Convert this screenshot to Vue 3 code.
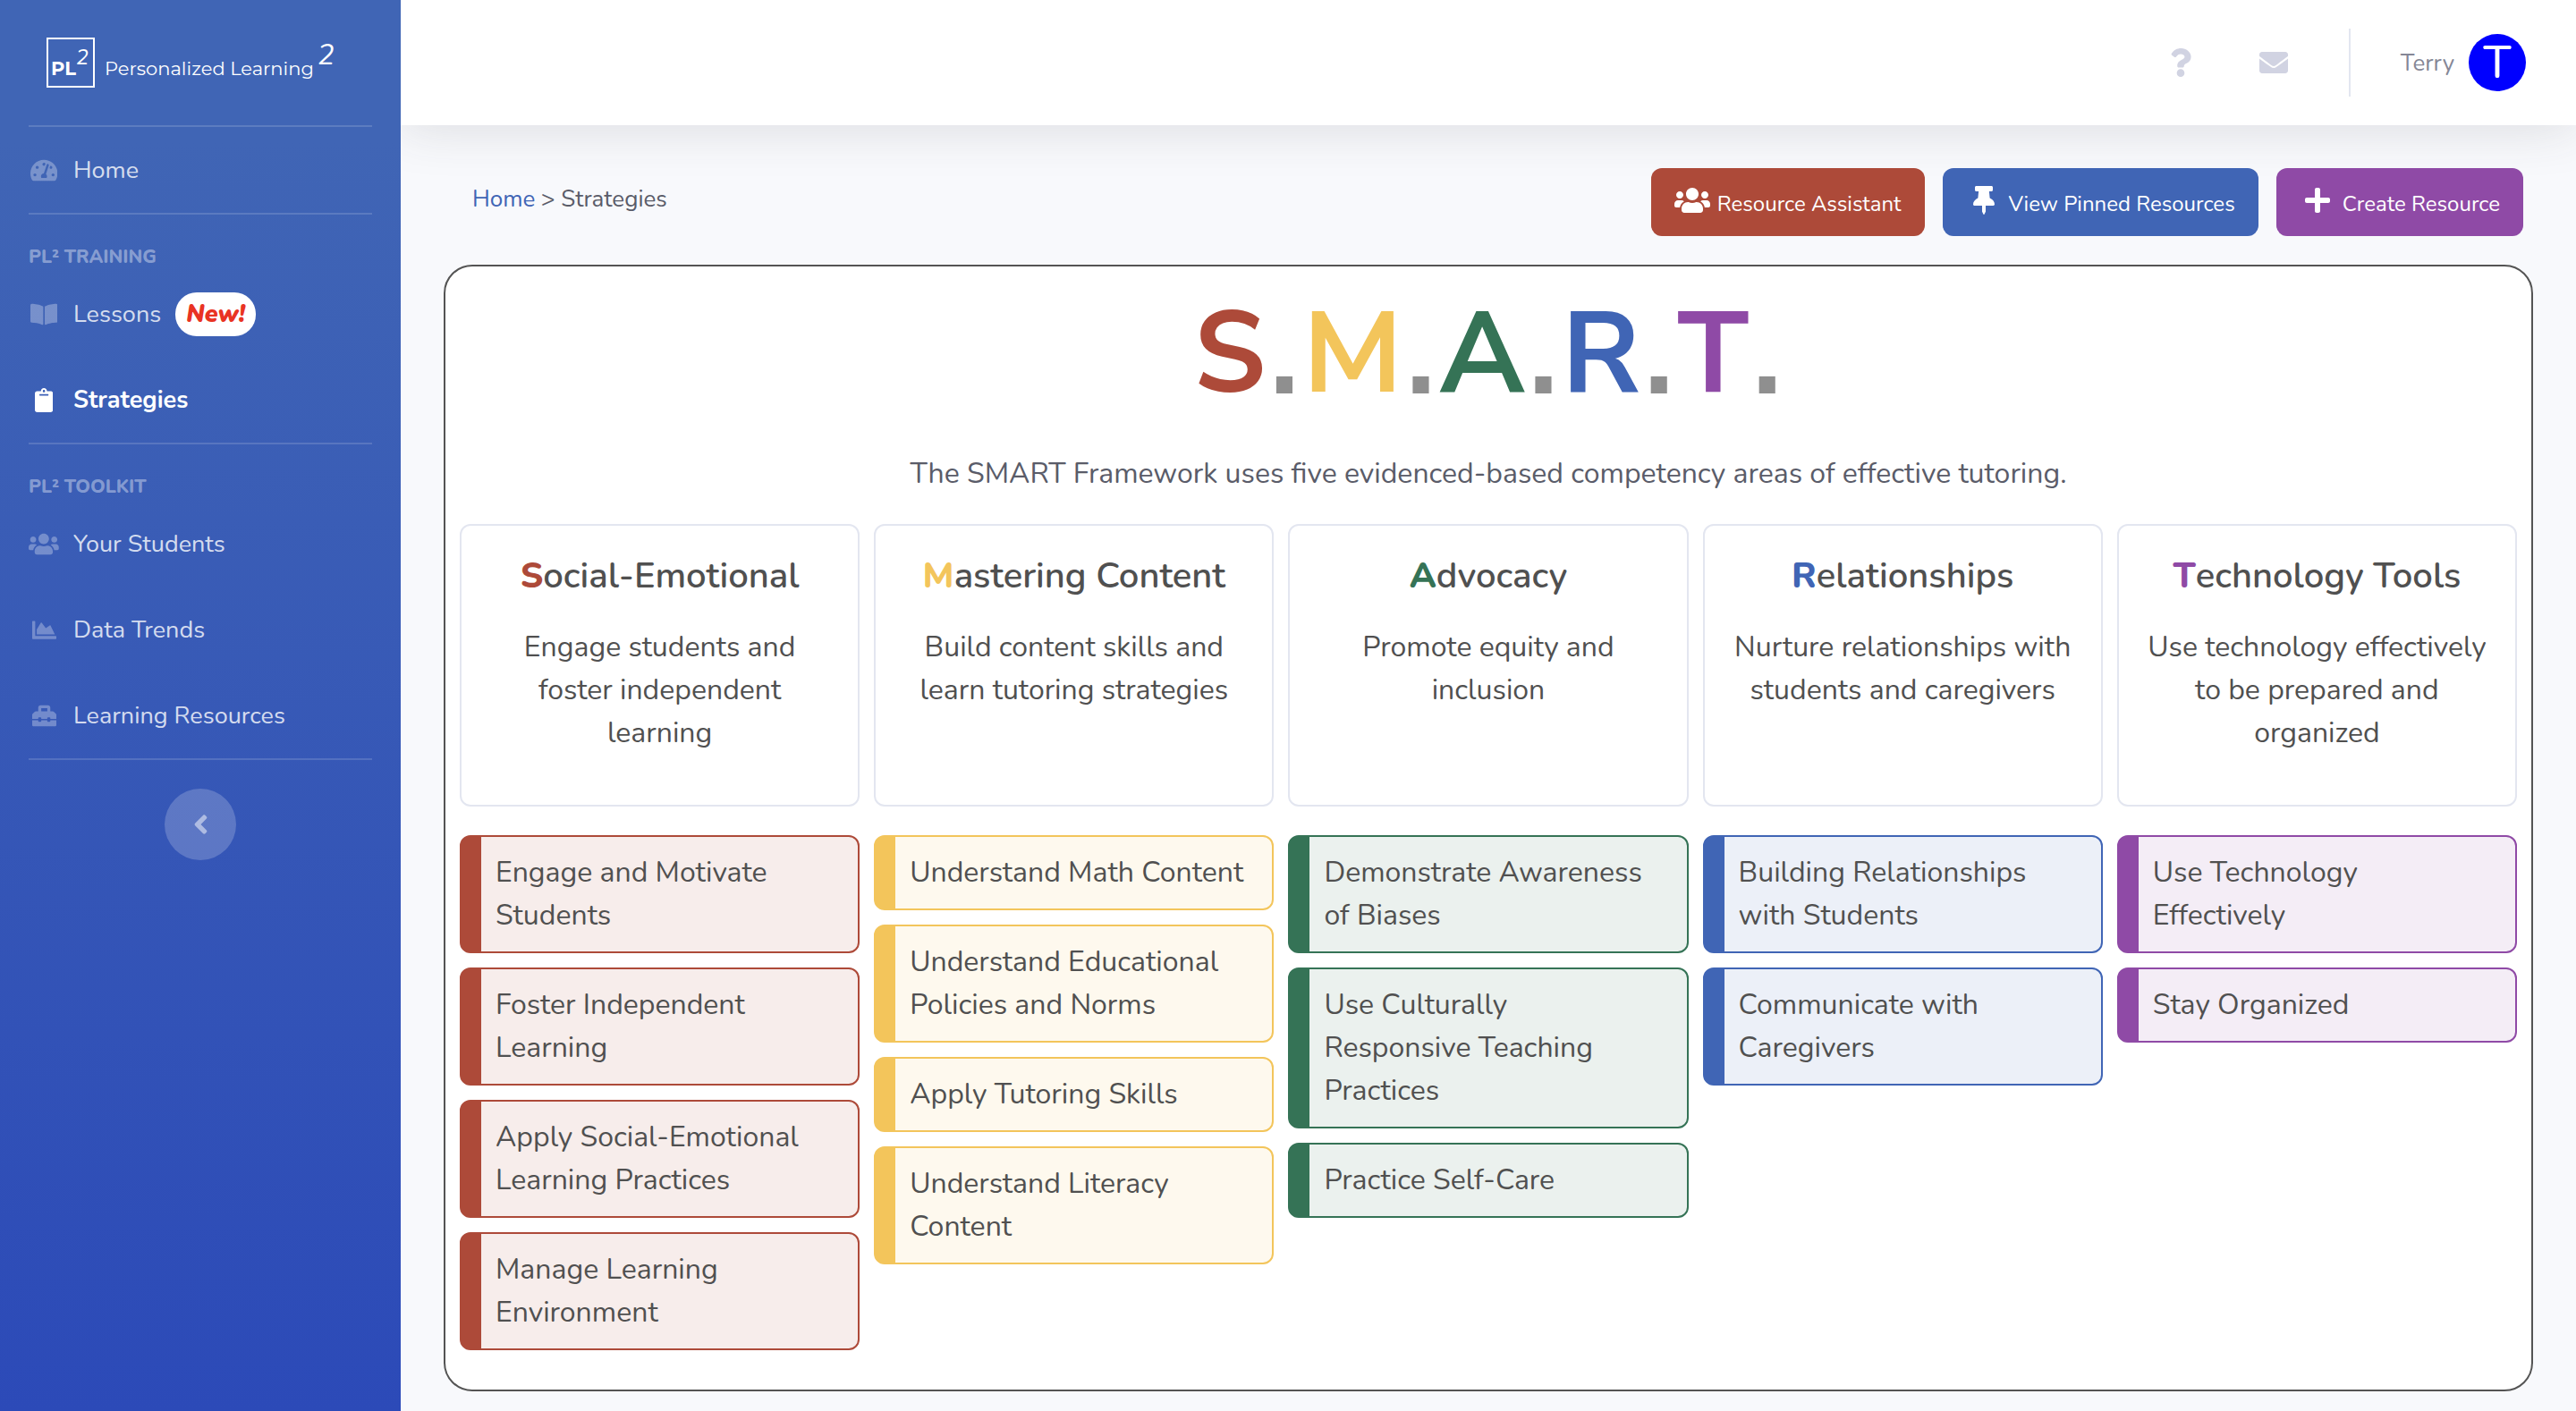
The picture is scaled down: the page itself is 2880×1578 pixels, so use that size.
<script setup>
const icons = {
  home: { w: 576, d: 'M288 32C128.94 32 0 160.94 0 320c0 52.8 14.25 102.26 39.06 144.8 5.61 9.62 16.3 15.2 27.44 15.2h443c11.14 0 21.83-5.58 27.44-15.2C561.75 422.26 576 372.8 576 320c0-159.06-128.94-288-288-288zm0 64c14.71 0 26.58 10.13 30.32 23.65-1.11 2.26-2.64 4.23-3.45 6.67l-9.22 27.67c-5.13 3.49-10.97 6.01-17.64 6.01-17.67 0-32-14.33-32-32S270.33 96 288 96zM96 384c-17.67 0-32-14.33-32-32s14.33-32 32-32 32 14.33 32 32-14.33 32-32 32zm48-160c-17.67 0-32-14.33-32-32s14.33-32 32-32 32 14.33 32 32-14.33 32-32 32zm246.77-72.41l-61.33 184C343.13 347.33 352 364.54 352 384c0 11.72-3.38 22.55-8.88 32H232.88c-5.5-9.45-8.88-20.28-8.88-32 0-33.94 26.5-61.43 59.9-63.59l61.34-184.01c4.17-12.56 17.73-19.45 30.36-15.17 12.57 4.19 19.35 17.79 15.17 30.36zm14.66 57.2l15.52-46.55c3.47-1.29 7.13-2.23 11.05-2.23 17.67 0 32 14.33 32 32s-14.33 32-32 32c-11.38-.01-20.89-6.28-26.57-15.22zM480 384c-17.67 0-32-14.33-32-32s14.33-32 32-32 32 14.33 32 32-14.33 32-32 32z' },
  book: { w: 576, d: 'M542.22 32.05c-54.8 3.11-163.72 14.43-230.96 55.59-4.64 2.84-7.27 7.89-7.27 13.17v363.87c0 11.55 12.63 18.85 23.28 13.49 69.18-34.82 169.23-44.32 218.7-46.92 16.89-.89 30.02-14.43 30.02-30.66V62.75c.01-17.71-15.35-31.74-33.77-30.7zM264.73 87.64C197.5 46.48 88.58 35.17 33.78 32.05 15.36 31.01 0 45.04 0 62.75V400.6c0 16.24 13.13 29.78 30.02 30.66 49.49 2.6 149.59 12.11 218.77 46.95 10.62 5.35 23.21-1.94 23.21-13.46V100.63c0-5.29-2.62-10.14-7.27-12.99z' },
  clipboard: { w: 384, d: 'M384 112v352c0 26.51-21.49 48-48 48H48c-26.51 0-48-21.49-48-48V112c0-26.51 21.49-48 48-48h80c0-35.29 28.71-64 64-64s64 28.71 64 64h80c26.51 0 48 21.49 48 48zM192 40c-13.255 0-24 10.745-24 24s10.745 24 24 24 24-10.745 24-24-10.745-24-24-24m96 114v-20a6 6 0 0 0-6-6H102a6 6 0 0 0-6 6v20a6 6 0 0 0 6 6h180a6 6 0 0 0 6-6z' },
  users: { w: 640, d: 'M96 224c35.3 0 64-28.7 64-64s-28.7-64-64-64-64 28.7-64 64 28.7 64 64 64zm448 0c35.3 0 64-28.7 64-64s-28.7-64-64-64-64 28.7-64 64 28.7 64 64 64zm32 32h-64c-17.6 0-33.5 7.1-45.1 18.6 40.3 22.1 68.9 62 75.1 109.4h66c17.7 0 32-14.3 32-32v-32c0-35.3-28.7-64-64-64zm-256 0c61.9 0 112-50.1 112-112S381.9 32 320 32 208 82.1 208 144s50.1 112 112 112zm76.8 32h-8.3c-20.8 10-43.9 16-68.5 16s-47.6-6-68.5-16h-8.3C179.6 288 128 339.6 128 403.2V432c0 26.5 21.5 48 48 48h288c26.5 0 48-21.5 48-48v-28.8c0-63.6-51.6-115.2-115.2-115.2zm-223.7-13.4C161.5 263.1 145.6 256 128 256H64c-35.3 0-64 28.7-64 64v32c0 17.7 14.3 32 32 32h65.9c6.3-47.4 34.9-87.3 75.2-109.4z' },
  chart: { w: 512, d: 'M500 384c6.6 0 12 5.4 12 12v40c0 6.6-5.4 12-12 12H12c-6.6 0-12-5.4-12-12V76c0-6.6 5.4-12 12-12h40c6.6 0 12 5.4 12 12v308h436zM372.7 159.5L288 216l-85.3-113.7c-5.1-6.8-15.5-6.3-19.9 1L96 248v104h384l-89.9-187.8c-3.2-6.5-11.4-8.7-17.4-4.7z' },
  toolbox: { w: 512, d: 'M502.63 214.63l-45.25-45.25c-6-6-14.14-9.37-22.63-9.37H384V80c0-26.51-21.49-48-48-48H176c-26.51 0-48 21.49-48 48v80H77.25c-8.49 0-16.62 3.37-22.63 9.37L9.37 214.63c-6 6-9.37 14.14-9.37 22.63V320h128v-16c0-8.84 7.16-16 16-16h32c8.84 0 16 7.16 16 16v16h128v-16c0-8.84 7.16-16 16-16h32c8.84 0 16 7.16 16 16v16h128v-82.75c0-8.48-3.37-16.62-9.37-22.62zM320 160H192V96h128v64zm64 208c0 8.84-7.16 16-16 16h-32c-8.84 0-16-7.16-16-16v-16H192v16c0 8.84-7.16 16-16 16h-32c-8.84 0-16-7.16-16-16v-16H0v96c0 17.67 14.33 32 32 32h448c17.67 0 32-14.33 32-32v-96H384v16z' },
  question: { w: 384, d: 'M202.021 0C122.202 0 70.503 32.703 29.914 91.026c-7.363 10.58-5.093 25.086 5.178 32.874l43.138 32.709c10.373 7.865 25.132 6.026 33.253-4.148 25.049-31.381 43.63-49.449 82.757-49.449 30.764 0 68.816 19.799 68.816 49.631 0 22.552-18.617 34.134-48.993 51.164-35.423 19.86-82.299 44.576-82.299 106.405V320c0 13.255 10.745 24 24 24h72.471c13.255 0 24-10.745 24-24v-5.773c0-42.86 125.268-44.645 125.268-160.627C377.504 66.256 286.902 0 202.021 0zM192 373.459c-38.196 0-69.271 31.075-69.271 69.271 0 38.195 31.075 69.27 69.271 69.27s69.271-31.075 69.271-69.271-31.075-69.27-69.271-69.27z' },
  envelope: { w: 512, d: 'M502.3 190.8c3.9-3.1 9.7-.2 9.7 4.7V400c0 26.5-21.5 48-48 48H48c-26.5 0-48-21.5-48-48V195.6c0-5 5.7-7.8 9.7-4.7 22.4 17.4 52.1 39.5 154.1 113.6 21.1 15.4 56.7 47.8 92.2 47.6 35.7.3 72-32.8 92.3-47.6 102-74.1 131.6-96.3 154-113.7zM256 320c23.2.4 56.6-29.2 73.4-41.4 132.7-96.3 142.8-104.7 173.4-128.7 5.8-4.5 9.2-11.5 9.2-18.9v-19c0-26.5-21.5-48-48-48H48c-26.5 0-48 21.5-48 48v19c0 7.4 3.4 14.3 9.2 18.9 30.6 23.9 40.7 32.4 173.4 128.7 16.8 12.2 50.2 41.8 73.4 41.4z' },
  pin: { w: 384, d: 'M298.028 214.267L285.793 96H328c13.255 0 24-10.745 24-24V24c0-13.255-10.745-24-24-24H56C42.745 0 32 10.745 32 24v48c0 13.255 10.745 24 24 24h42.207L85.972 214.267C37.465 236.82 0 277.261 0 328c0 13.255 10.745 24 24 24h136v104.007c0 1.242.289 2.467.845 3.578l24 48c2.941 5.882 11.364 5.893 14.311 0l24-48a8.008 8.008 0 0 0 .845-3.578V352h136c13.255 0 24-10.745 24-24-.001-51.183-37.983-91.42-85.973-113.733z' },
  plus: { w: 448, d: 'M416 208H272V64c0-17.67-14.33-32-32-32h-32c-17.67 0-32 14.33-32 32v144H32c-17.67 0-32 14.33-32 32v32c0 17.67 14.33 32 32 32h144v144c0 17.67 14.33 32 32 32h32c17.67 0 32-14.33 32-32V304h144c17.67 0 32-14.33 32-32v-32c0-17.67-14.33-32-32-32z' },
  left: { w: 256, d: 'M31.7 239l136-136c9.4-9.4 24.6-9.4 33.9 0l22.6 22.6c9.4 9.4 9.4 24.6 0 33.9L127.9 256l96.4 96.4c9.4 9.4 9.4 24.6 0 33.9L201.7 409c-9.4 9.4-24.6 9.4-33.9 0l-136-136c-9.5-9.4-9.5-24.6-.1-34z' },
}

const box = (name) => `0 0 ${icons[name].w} 512`

const groups = [
  { items: [{ label: 'Home', icon: 'home' }] },
  {
    title: 'PL² TRAINING',
    items: [
      { label: 'Lessons', icon: 'book', badge: 'New!' },
      { label: 'Strategies', icon: 'clipboard', active: true },
    ],
  },
  {
    title: 'PL² TOOLKIT',
    items: [
      { label: 'Your Students', icon: 'users' },
      { label: 'Data Trends', icon: 'chart' },
      { label: 'Learning Resources', icon: 'toolbox' },
    ],
  },
]

const actions = [
  { label: 'Resource Assistant', icon: 'users', tone: 'red' },
  { label: 'View Pinned Resources', icon: 'pin', tone: 'blue' },
  { label: 'Create Resource', icon: 'plus', tone: 'purple' },
]

const areas = [
  {
    tone: 'red', initial: 'S', rest: 'ocial-Emotional',
    text: 'Engage students and foster independent learning',
    items: ['Engage and Motivate Students', 'Foster Independent Learning', 'Apply Social-Emotional Learning Practices', 'Manage Learning Environment'],
  },
  {
    tone: 'yellow', initial: 'M', rest: 'astering Content',
    text: 'Build content skills and learn tutoring strategies',
    items: ['Understand Math Content', 'Understand Educational Policies and Norms', 'Apply Tutoring Skills', 'Understand Literacy Content'],
  },
  {
    tone: 'green', initial: 'A', rest: 'dvocacy',
    text: 'Promote equity and inclusion',
    items: ['Demonstrate Awareness of Biases', 'Use Culturally Responsive Teaching Practices', 'Practice Self-Care'],
  },
  {
    tone: 'blue', initial: 'R', rest: 'elationships',
    text: 'Nurture relationships with students and caregivers',
    items: ['Building Relationships with Students', 'Communicate with Caregivers'],
  },
  {
    tone: 'purple', initial: 'T', rest: 'echnology Tools',
    text: 'Use technology effectively to be prepared and organized',
    items: ['Use Technology Effectively', 'Stay Organized'],
  },
]
</script>

<template>
  <div class="page">
    <aside class="sidebar">
      <a class="brand" href="#">
        <span class="brand-mark">PL<sup>2</sup></span>
        <span class="brand-name">Personalized Learning<sup>2</sup></span>
      </a>
      <nav>
        <section v-for="(group, i) in groups" :key="i" class="nav-group">
          <h2 v-if="group.title" class="nav-title">{{ group.title }}</h2>
          <a v-for="item in group.items" :key="item.label" href="#" class="nav-item" :class="{ active: item.active }">
            <span class="nav-icon"><svg :viewBox="box(item.icon)"><path :d="icons[item.icon].d" /></svg></span>
            <span>{{ item.label }}</span>
            <span v-if="item.badge" class="badge">{{ item.badge }}</span>
          </a>
        </section>
      </nav>
      <button class="collapse" type="button" aria-label="Collapse sidebar">
        <svg :viewBox="box('left')"><path :d="icons.left.d" /></svg>
      </button>
    </aside>

    <div class="content">
      <header class="topbar">
        <a class="top-link" href="#" aria-label="Help"><svg :viewBox="box('question')"><path :d="icons.question.d" /></svg></a>
        <a class="top-link" href="#" aria-label="Messages"><svg :viewBox="box('envelope')"><path :d="icons.envelope.d" /></svg></a>
        <span class="top-divider"></span>
        <a class="user" href="#">
          <span>Terry</span>
          <span class="avatar">T</span>
        </a>
      </header>

      <main>
        <div class="toolbar">
          <div class="crumbs"><a href="#">Home</a> &gt; Strategies</div>
          <div class="actions">
            <button v-for="action in actions" :key="action.label" type="button" class="action" :class="action.tone">
              <span class="action-icon"><svg :viewBox="box(action.icon)"><path :d="icons[action.icon].d" /></svg></span>
              <span class="action-label">{{ action.label }}</span>
            </button>
          </div>
        </div>

        <section class="panel">
          <h1 class="smart">
            <template v-for="area in areas" :key="area.initial"><span :class="area.tone">{{ area.initial }}</span><span class="dot">.</span></template>
          </h1>
          <p class="lead">The SMART Framework uses five evidenced-based competency areas of effective tutoring.</p>
          <div class="columns">
            <div v-for="area in areas" :key="area.initial" class="column" :class="area.tone">
              <div class="summary">
                <h2><b>{{ area.initial }}</b>{{ area.rest }}</h2>
                <p>{{ area.text }}</p>
              </div>
              <a v-for="item in area.items" :key="item" href="#" class="topic">{{ item }}</a>
            </div>
          </div>
        </section>
      </main>
    </div>
  </div>
</template>

<style>
body {
  margin: 0;
  background: #f8f9fc;
}
</style>

<style scoped>
* {
  box-sizing: border-box;
}

svg {
  display: block;
  fill: currentColor;
}

a {
  color: inherit;
  text-decoration: none;
}

h1,
h2,
p {
  margin: 0;
}

button {
  border: 0;
  font: inherit;
  color: inherit;
  cursor: pointer;
}

.red {
  --tone: #ad4a39;
  --tint: #f7edeb;
}

.yellow {
  --tone: #f3c55b;
  --tint: #fef9ee;
}

.green {
  --tone: #357356;
  --tint: #ebf1ee;
}

.blue {
  --tone: #4065b5;
  --tint: #ecf0f8;
}

.purple {
  --tone: #8f4aa6;
  --tint: #f4edf6;
}

.page {
  display: flex;
  min-height: 100vh;
  font-family: Nunito, Lato, sans-serif;
  font-size: 27px;
  color: #5a5c69;
}

.sidebar {
  flex: none;
  display: flex;
  flex-direction: column;
  width: 448px;
  background: linear-gradient(180deg, #4065b5 10%, #2c4ab8 100%);
  color: rgba(255, 255, 255, 0.8);
}

.brand {
  display: flex;
  align-items: center;
  gap: 11px;
  height: 140px;
  padding: 0 52px;
  font-family: Montserrat, Inter, sans-serif;
  font-size: 21px;
  color: #fff;
}

.brand sup {
  font-family: Nunito, Lato, sans-serif;
  font-style: italic;
  font-weight: 400;
  line-height: 0;
  vertical-align: 12px;
}

.brand-mark {
  flex: none;
  width: 54px;
  height: 56px;
  padding: 19px 0 0 3px;
  border: 2px solid #fff;
  font-weight: 700;
  line-height: 28px;
  white-space: nowrap;
}

.brand-mark sup {
  font-size: 24px;
}

.brand-name {
  padding-top: 11px;
  white-space: nowrap;
}

.brand-name sup {
  margin-left: 4px;
  font-size: 32px;
}

.nav-group {
  margin: 0 32px;
  border-top: 2px solid rgba(255, 255, 255, 0.15);
}

.nav-group:last-child {
  border-bottom: 2px solid rgba(255, 255, 255, 0.15);
}

.nav-title {
  height: 63px;
  padding-top: 31px;
  font-size: 21px;
  font-weight: 800;
  line-height: 32px;
  color: rgba(255, 255, 255, 0.4);
}

.nav-item {
  display: flex;
  align-items: center;
  gap: 16px;
  height: 96px;
}

.nav-item.active {
  color: #fff;
  font-weight: 700;
}

.nav-icon {
  display: flex;
  justify-content: center;
  width: 34px;
  color: rgba(255, 255, 255, 0.3);
}

.active .nav-icon {
  color: #fff;
}

.nav-icon svg {
  height: 27px;
}

.badge {
  padding: 0 12px;
  border-radius: 24px;
  background: #fff;
  font-weight: 900;
  font-style: italic;
  line-height: 49px;
  color: #e93323;
}

.collapse {
  display: grid;
  place-items: center;
  width: 80px;
  height: 80px;
  margin: 32px auto;
  padding: 0;
  border-radius: 50%;
  background: rgba(255, 255, 255, 0.2);
  color: rgba(255, 255, 255, 0.5);
}

.collapse svg {
  height: 34px;
}

.content {
  flex: 1;
  min-width: 0;
  overflow: clip;
}

.topbar {
  display: flex;
  align-items: center;
  justify-content: flex-end;
  height: 140px;
  padding-right: 56px;
  background: #fff;
  box-shadow: 0 4px 56px rgba(58, 59, 69, 0.15);
}

.top-link {
  display: flex;
  justify-content: center;
  width: 104px;
  color: #d1d3e2;
}

.top-link svg {
  height: 32px;
}

.top-divider {
  width: 2px;
  height: 76px;
  margin: 0 56px 0 32px;
  background: #e3e6f0;
}

.user {
  display: flex;
  align-items: center;
  gap: 16px;
  font-size: 26px;
  color: #858796;
}

.avatar {
  width: 64px;
  height: 64px;
  border-radius: 50%;
  background: #00f;
  font-size: 51px;
  font-weight: 500;
  line-height: 64px;
  text-align: center;
  color: #fff;
}

main {
  padding: 48px 48px 22px;
}

.toolbar {
  display: flex;
  align-items: flex-start;
  justify-content: space-between;
  height: 108px;
  padding: 0 11px 0 32px;
}

.crumbs {
  font-size: 26px;
  line-height: 70px;
}

.crumbs a {
  color: #4065b5;
}

.actions {
  display: flex;
  gap: 20px;
}

.action {
  display: flex;
  align-items: center;
  gap: 8px;
  height: 76px;
  padding: 0 26px;
  border-radius: 12px;
  background: var(--tone);
  font-size: 24px;
  color: #fff;
}

.action-icon {
  display: flex;
  justify-content: center;
  width: 40px;
  padding-bottom: 4px;
}

.action-icon svg {
  height: 32px;
}

.action-label {
  padding-top: 3px;
}

.panel {
  padding: 30px 16px 44px;
  border: 2px solid #545454;
  border-radius: 32px;
  background: #fff;
  color: #505050;
}

.smart {
  display: flex;
  justify-content: center;
  gap: 3px;
  height: 178px;
  font-family: "Nunito Sans", Mulish, Lato, sans-serif;
  font-size: 128px;
  font-weight: 700;
  line-height: 136px;
}

.smart span {
  color: var(--tone);
}

.smart .dot {
  font-family: "Liberation Sans", sans-serif;
  color: #8f8f8f;
}

.lead {
  margin-bottom: 32px;
  font-size: 32px;
  line-height: 48px;
  text-align: center;
  color: #5a5c69;
}

.columns {
  display: grid;
  grid-template-columns: repeat(5, minmax(0, 1fr));
  gap: 16px;
}

.column {
  display: flex;
  flex-direction: column;
  gap: 16px;
  font-size: 32px;
  line-height: 48px;
}

.summary {
  min-height: 316px;
  margin-bottom: 16px;
  padding: 32px;
  border: 2px solid #e3e6f0;
  border-radius: 12px;
  text-align: center;
}

.summary h2 {
  margin-bottom: 32px;
  font-size: 40px;
  font-weight: 600;
}

.summary b {
  font-weight: 800;
  color: var(--tone);
}

.topic {
  padding: 16px 30px 16px 16px;
  border: 2px solid var(--tone);
  border-left-width: 24px;
  border-radius: 12px;
  background: var(--tint);
}
</style>
